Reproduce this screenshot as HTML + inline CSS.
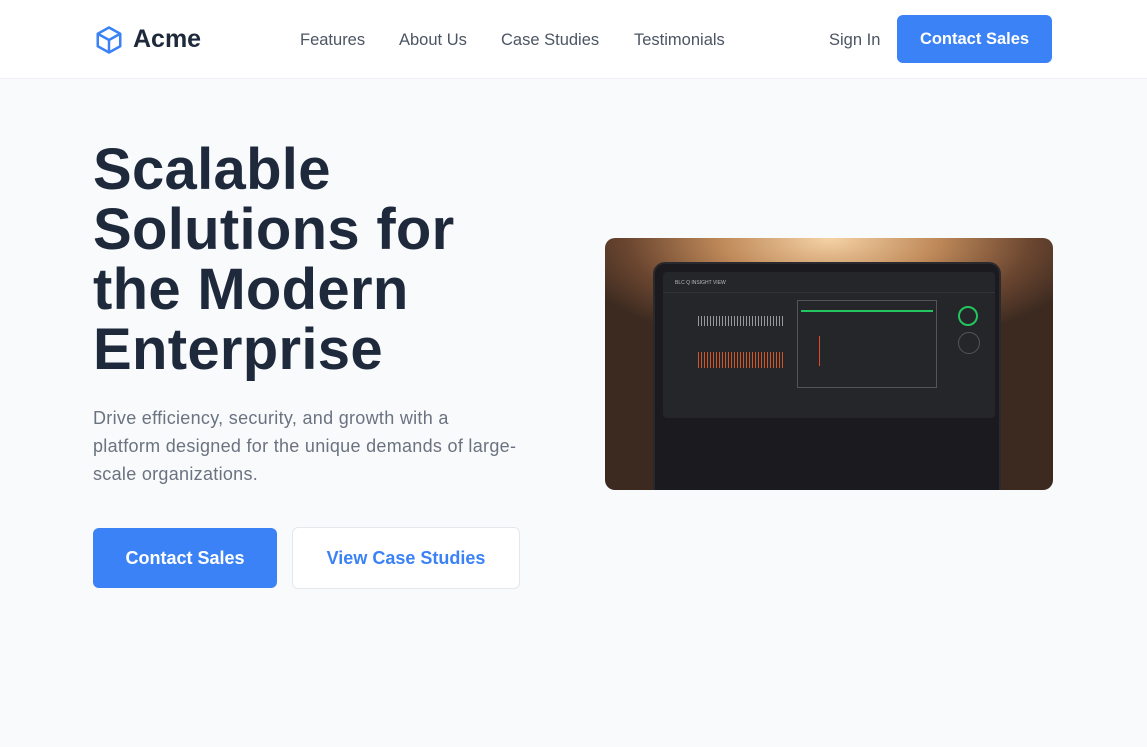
<!DOCTYPE html>
<html><head><meta charset="utf-8"><style>
*{margin:0;padding:0;box-sizing:border-box}
body{width:1147px;height:747px;overflow:hidden;background:#f8fafc;font-family:"Liberation Sans",sans-serif;position:relative}
.nav{position:absolute;top:0;left:0;width:1147px;height:79px;background:#fff;border-bottom:1px solid #eef0f3}
.a{position:absolute;font-size:16.5px;color:#4b5563;top:31px}
.btn{position:absolute;border-radius:6px;font-weight:bold;display:flex;align-items:center;justify-content:center}
h1{position:absolute;left:93px;top:140px;font-size:58px;line-height:60px;letter-spacing:0.3px;color:#1e293b;font-weight:bold}
p{position:absolute;left:93px;top:404px;white-space:nowrap;font-size:18px;line-height:28px;color:#6b7280;letter-spacing:0.3px}
.img{position:absolute;left:605px;top:238px;width:448px;height:252px;border-radius:10px;overflow:hidden;background:radial-gradient(ellipse 60% 45% at 50% 0%,#f5d3a6 0%,#c08a5a 40%,#6b4630 75%,#3c2a20 100%)}
.tab{position:absolute;left:48px;top:24px;width:348px;height:240px;background:#1b1b1f;border-radius:12px;border:2px solid #2a2a2e}
.pan{position:absolute;left:8px;top:8px;width:332px;height:146px;background:#25262a;border-radius:4px}
.sm{position:absolute;font-size:5px;color:#888}
</style></head><body>
<div class="nav">
<svg style="position:absolute;left:94px;top:25px" width="30" height="30" viewBox="0 0 24 24" fill="none" stroke="#3b82f6" stroke-width="2" stroke-linejoin="round"><path d="M12 2 21 7v10l-9 5-9-5V7z"/><path d="M3 7l9 5 9-5M12 12v10"/></svg>
<div style="position:absolute;left:133px;top:25px;font-size:25px;font-weight:bold;color:#1e293b">Acme</div>
<div class="a" style="left:300px">Features</div>
<div class="a" style="left:399px">About Us</div>
<div class="a" style="left:501px">Case Studies</div>
<div class="a" style="left:634px">Testimonials</div>
<div class="a" style="left:829px">Sign In</div>
<div class="btn" style="left:897px;top:15px;width:155px;height:48px;background:#3b82f6;color:#fff;font-size:16.5px">Contact Sales</div>
</div>
<h1>Scalable<br>Solutions for<br>the Modern<br>Enterprise</h1>
<p>Drive efficiency, security, and growth with a<br>platform designed for the unique demands of large-<br>scale organizations.</p>
<div class="btn" style="left:93px;top:528px;width:184px;height:60px;background:#3b82f6;color:#fff;font-size:18px">Contact Sales</div>
<div class="btn" style="left:292px;top:527px;width:228px;height:62px;background:#fff;border:1px solid #e5e7eb;color:#3b82f6;font-size:18px">View Case Studies</div>
<div class="img"><div class="tab"><div class="pan">
<div class="sm" style="left:12px;top:8px;color:#bbb">BLC Q INSIGHT VIEW</div>
<div style="position:absolute;left:0;top:20px;width:332px;height:1px;background:#333"></div>
<div style="position:absolute;left:35px;top:44px;width:85px;height:10px;background:repeating-linear-gradient(90deg,#999 0 1px,transparent 1px 3px)"></div>
<div style="position:absolute;left:35px;top:80px;width:85px;height:16px;background:repeating-linear-gradient(90deg,#d0562a 0 1px,transparent 1px 3px)"></div>
<div style="position:absolute;left:134px;top:28px;width:140px;height:88px;border:1px solid #555"></div>
<div style="position:absolute;left:138px;top:38px;width:132px;height:2px;background:#22c55e"></div>
<div style="position:absolute;left:156px;top:64px;width:1px;height:30px;background:#e04a2a"></div>
<div style="position:absolute;left:295px;top:34px;width:20px;height:20px;border:2px solid #22c55e;border-radius:50%"></div>
<div style="position:absolute;left:295px;top:60px;width:22px;height:22px;border:1px solid #555;border-radius:50%"></div>
</div></div></div>
</body></html>
